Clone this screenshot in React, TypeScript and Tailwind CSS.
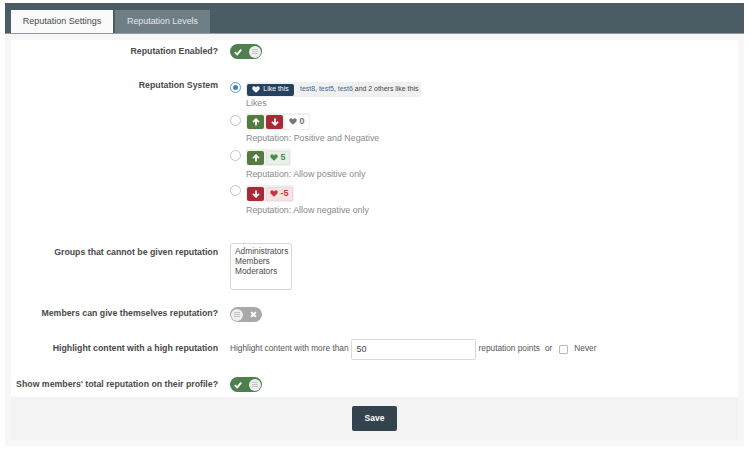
import React from "react";

const font = { fontFamily: '"Liberation Sans", Arial, sans-serif' };

function Heart({ className = "" }: { className?: string }) {
  return (
    <svg viewBox="0 0 24 22" className={className} fill="currentColor">
      <path d="M12 21.5 2.6 12.2C-.4 9.2-.4 5 2 2.6 4.6.2 8.6.4 12 4.4 15.4.4 19.4.2 22 2.6c2.4 2.4 2.4 6.6-.6 9.6z" />
    </svg>
  );
}

function Arrow({ down = false }: { down?: boolean }) {
  return (
    <svg viewBox="0 0 10 10" className={`w-[8px] h-[8px] text-white ${down ? "rotate-180" : ""}`} fill="none" stroke="currentColor" strokeWidth="2.2">
      <path d="M5 9.5V1.5M1.2 5.2 5 1.5l3.8 3.7" />
    </svg>
  );
}

function Toggle({ on }: { on: boolean }) {
  const knob = (
    <span className="w-[12px] h-[12px] rounded-full bg-[#eeeeee] flex flex-col items-center justify-center gap-[1px]">
      <span className="w-[6px] h-[1px] bg-[#c4c4c4]" />
      <span className="w-[6px] h-[1px] bg-[#c4c4c4]" />
      <span className="w-[6px] h-[1px] bg-[#c4c4c4]" />
    </span>
  );
  return (
    <span className={`w-[32px] h-[15px] rounded-full flex items-center px-[1px] ${on ? "bg-[#4f7f4f] justify-end" : "bg-[#a9a9a9] justify-start"}`}>
      {on ? (
        <>
          <svg viewBox="0 0 10 10" className="w-[8px] h-[8px] mr-[7px] text-white" fill="none" stroke="currentColor" strokeWidth="2.4">
            <path d="M1 5.2 4 8l5-6" />
          </svg>
          {knob}
        </>
      ) : (
        <>
          {knob}
          <svg viewBox="0 0 10 10" className="w-[7px] h-[7px] ml-[7px] text-white" fill="none" stroke="currentColor" strokeWidth="2.6">
            <path d="M1.5 1.5l7 7M8.5 1.5l-7 7" />
          </svg>
        </>
      )}
    </span>
  );
}

function Radio({ on = false }: { on?: boolean }) {
  return (
    <span className={`w-[11px] h-[11px] shrink-0 rounded-full border bg-white flex items-center justify-center ${on ? "border-[#5b9bd5]" : "border-[#c4c4c4]"}`}>
      {on && <span className="w-[5px] h-[5px] rounded-full bg-[#3d85c6]" />}
    </span>
  );
}

function Square({ color, down = false }: { color: string; down?: boolean }) {
  return (
    <span className={`w-[17px] h-[14px] rounded-[2px] flex items-center justify-center ${color}`}>
      <Arrow down={down} />
    </span>
  );
}

function Option({
  on,
  children,
  label,
  mt,
  radioMt,
  boxH,
  labelMt,
}: {
  on?: boolean;
  children: React.ReactNode;
  label: string;
  mt: string;
  radioMt: string;
  boxH: string;
  labelMt: string;
}) {
  return (
    <div className={`flex ${mt}`}>
      <span className={radioMt}><Radio on={on} /></span>
      <div className="ml-[5px] flex flex-col items-start">
        <div className={`flex ${boxH} items-center bg-[#f0f0f0] rounded-[1px] px-[1px] gap-[2px]`}>{children}</div>
        <div className={`text-[8.85px] leading-[12px] ${labelMt} text-[#8a8a8a]`}>{label}</div>
      </div>
    </div>
  );
}

function Label({ children, className = "" }: { children: React.ReactNode; className?: string }) {
  return <div className={`w-[207px] shrink-0 text-right font-bold text-[8.75px] text-[#4a4a4a] ${className}`}>{children}</div>;
}

export default function App() {
  return (
    <div className="w-[750px] h-[471px] bg-white pt-[3px] pl-[5px]" style={font}>
      <div className="w-[739px] h-[443px] bg-[#f7f7f7] flex flex-col">
        <div className="h-[30px] bg-[#4c5c65] border-b border-[#8f999f] flex items-end pl-[6px] gap-[2px] shrink-0 box-content">
          <div className="w-[102px] h-[23px] bg-[#fafafa] text-[#3f4a50] text-[9px] flex items-center justify-center">Reputation Settings</div>
          <div className="w-[95px] h-[23px] bg-[#6f7d84] text-[#e4e8ea] text-[8.9px] flex items-center justify-center">Reputation Levels</div>
        </div>
        <div className="mx-[6px] mt-[6px] flex-1 bg-white flex flex-col">
          <div className="flex items-center mt-[4px] h-[15px]">
            <Label>Reputation Enabled?</Label>
            <div className="ml-[12px]"><Toggle on /></div>
          </div>

          <div className="flex mt-[20px]">
            <Label className="leading-[12px]">Reputation System</Label>
            <div className="ml-[12px] pt-[3px] flex flex-col">
              <Option on label="Likes" mt="" radioMt="mt-0" boxH="h-[15px]" labelMt="mt-0">
                <span className="h-[12px] w-[47px] rounded-[2px] bg-[#24425f] text-white text-[6.9px] flex items-center justify-center gap-[3px]">
                  <Heart className="w-[8px] h-[7px]" />
                  Like this
                </span>
                <span className="ml-[4px] text-[6.95px] text-[#444444] mr-[2px] whitespace-nowrap">
                  <span className="text-[#3d6a94]">test8</span>, <span className="text-[#3d6a94]">test5</span>, <span className="text-[#3d6a94]">test6</span> and 2 others like this
                </span>
              </Option>
              <Option label="Reputation: Positive and Negative" mt="mt-[4px]" radioMt="mt-[2px]" boxH="h-[17px]" labelMt="mt-[2px]">
                <Square color="bg-[#557a3f]" />
                <Square color="bg-[#a82a34]" down />
                <span className="h-[14px] w-[24px] bg-white rounded-[2px] text-[9px] font-bold text-[#777777] flex items-center justify-center gap-[2px]">
                  <Heart className="w-[8px] h-[7px]" />0
                </span>
              </Option>
              <Option label="Reputation: Allow positive only" mt="mt-[5px]" radioMt="mt-[1px]" boxH="h-[17px]" labelMt="mt-[2px]">
                <Square color="bg-[#557a3f]" />
                <span className="h-[14px] w-[24px] bg-[#e9f1e6] border border-[#dfe7dc] rounded-[2px] text-[9px] font-bold text-[#4f8a55] flex items-center justify-center gap-[2px]">
                  <Heart className="w-[8px] h-[7px]" />5
                </span>
              </Option>
              <Option label="Reputation: Allow negative only" mt="mt-[5px]" radioMt="mt-0" boxH="h-[17px]" labelMt="mt-[2px]">
                <Square color="bg-[#a82a34]" down />
                <span className="h-[14px] w-[27px] bg-[#f6e1e3] border border-[#efd8da] rounded-[2px] text-[9px] font-bold text-[#bd3a44] flex items-center justify-center gap-[2px]">
                  <Heart className="w-[8px] h-[7px]" />-5
                </span>
              </Option>
            </div>
          </div>

          <div className="flex mt-[27px]">
            <Label className="pt-[3px] leading-[12px]">Groups that cannot be given reputation</Label>
            <div className="ml-[12px] w-[62px] h-[47px] border border-[#d6d6d6] rounded-[3px] px-[4px] py-[2px] text-[8.35px] leading-[10px] text-[#4d4d4d]">
              <div>Administrators</div>
              <div>Members</div>
              <div>Moderators</div>
            </div>
          </div>

          <div className="flex items-center mt-[17px] h-[15px]">
            <Label className="pb-[2px]">Members can give themselves reputation?</Label>
            <div className="ml-[12px]"><Toggle on={false} /></div>
          </div>

          <div className="flex items-center mt-[17px] h-[21px]">
            <Label className="pb-[2px]">Highlight content with a high reputation</Label>
            <div className="ml-[12px] flex items-center text-[8.3px] text-[#555555]">
              <span className="pb-[2px]">Highlight content with more than</span>
              <span className="ml-[2px] w-[125px] h-[21px] border border-[#d9d9d9] rounded-[2px] flex items-center pl-[5px] text-[9px] text-[#444444]">50</span>
              <span className="ml-[3px] pb-[2px]">reputation points</span>
              <span className="ml-[5px] pb-[2px]">or</span>
              <span className="ml-[7px] w-[9px] h-[9px] border border-[#bbbbbb] rounded-[1px] bg-white" />
              <span className="ml-[6px] pb-[2px]">Never</span>
            </div>
          </div>

          <div className="flex items-center mt-[17px] h-[15px]">
            <Label className="whitespace-nowrap">Show members' total reputation on their profile?</Label>
            <div className="ml-[12px]"><Toggle on /></div>
          </div>

          <div className="mt-[5px] h-[43px] bg-[#f3f3f3] flex items-start justify-center pt-[9px]">
            <button className="w-[45px] h-[25px] bg-[#33444e] rounded-[2px] text-white text-[8.5px] font-bold">Save</button>
          </div>
        </div>
        <div className="h-[6px] shrink-0" />
      </div>
    </div>
  );
}
